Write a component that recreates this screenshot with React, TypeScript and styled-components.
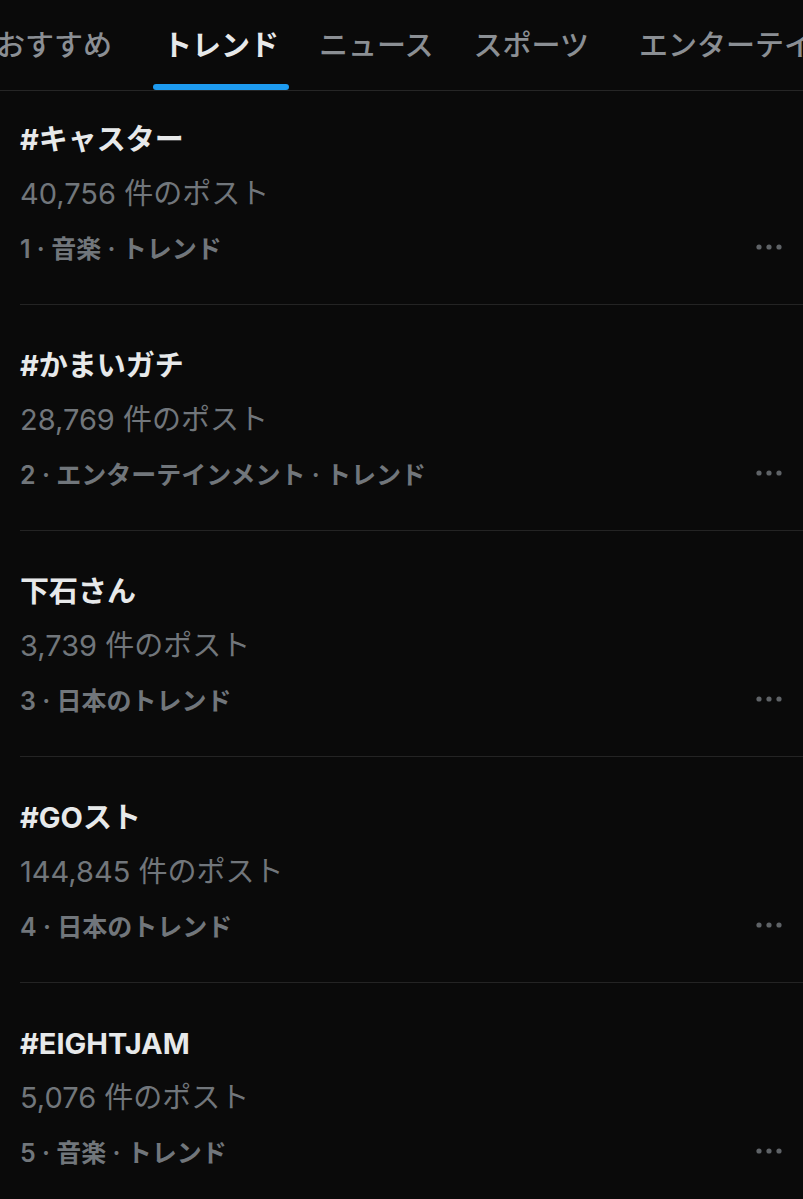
import React from "react";
import styled, { createGlobalStyle } from "styled-components";

const GlobalStyle = createGlobalStyle`
  html, body {
    margin: 0;
    padding: 0;
    background: #0a0a0a;
  }
  body {
    font-family: "Inter", "Noto Sans CJK JP", sans-serif;
    -webkit-font-smoothing: antialiased;
  }
`;

const Page = styled.div`
  width: 803px;
  min-height: 1199px;
  background: #0a0a0a;
  overflow: hidden;
`;

const TabBar = styled.nav`
  height: 90px;
  border-bottom: 1px solid #262626;
  overflow: hidden;
`;

const TabStrip = styled.div`
  display: flex;
  height: 100%;
  gap: 20px;
  margin-left: -14px;
  white-space: nowrap;
`;

const Tab = styled.div<{ $active?: boolean; $lead?: number }>`
  display: flex;
  flex-direction: column;
  flex-shrink: 0;
  height: 100%;
  padding: 0 10px;
  margin-left: ${(p) => p.$lead ?? 0}px;
  font-family: "Noto Sans CJK JP", sans-serif;
  font-size: 29px;
  font-weight: ${(p) => (p.$active ? 700 : 500)};
  color: ${(p) => (p.$active ? "#e7e9ea" : "#8b8f94")};
`;

const TabLabel = styled.span`
  flex: 1;
  display: flex;
  align-items: center;
  padding-top: 2px;
`;

const Indicator = styled.span<{ $active?: boolean }>`
  height: 6px;
  margin: 0 -10px;
  border-radius: 3px;
  background: ${(p) => (p.$active ? "#1d9bf0" : "transparent")};
`;

const List = styled.div`
  display: flex;
  flex-direction: column;
`;

const Row = styled.article<{ $first?: boolean }>`
  display: flex;
  flex-direction: column;
  margin-left: 20px;
  padding-top: ${(p) => (p.$first ? 29 : 41)}px;
  padding-bottom: 37px;
  border-bottom: 1px solid #242424;
`;

const Title = styled.div`
  height: 40px;
  line-height: 40px;
  font-size: 29px;
  font-weight: 700;
  color: #e7e9ea;
`;

const Count = styled.div`
  height: 40px;
  line-height: 40px;
  margin-top: 14px;
  font-size: 29px;
  font-weight: 400;
  color: #71767b;
`;

const MetaRow = styled.div`
  display: flex;
  align-items: center;
  justify-content: space-between;
  height: 40px;
  margin-top: 13px;
  padding-right: 21px;
`;

const Meta = styled.span`
  font-size: 25px;
  font-weight: 600;
  color: #71767b;
`;

const More = styled.svg`
  width: 26px;
  height: 6px;
  display: block;
`;

const tabs = [
  { label: "おすすめ" },
  { label: "トレンド", active: true, lead: 11 },
  { label: "ニュース" },
  { label: "スポーツ" },
  { label: "エンターテイメント", lead: 10 },
];

const trends = [
  { title: "#キャスター", count: "40,756", meta: "1 · 音楽 · トレンド" },
  { title: "#かまいガチ", count: "28,769", meta: "2 · エンターテインメント · トレンド" },
  { title: "下石さん", count: "3,739", meta: "3 · 日本のトレンド" },
  { title: "#GOスト", count: "144,845", meta: "4 · 日本のトレンド" },
  { title: "#EIGHTJAM", count: "5,076", meta: "5 · 音楽 · トレンド" },
];

function DotsIcon() {
  return (
    <More viewBox="0 0 26 6">
      <circle cx="3" cy="3" r="2.6" fill="#5f6367" />
      <circle cx="13" cy="3" r="2.6" fill="#5f6367" />
      <circle cx="23" cy="3" r="2.6" fill="#5f6367" />
    </More>
  );
}

export default function App() {
  return (
    <Page>
      <GlobalStyle />
      <TabBar>
        <TabStrip>
          {tabs.map((t) => (
            <Tab key={t.label} $active={t.active} $lead={t.lead}>
              <TabLabel>{t.label}</TabLabel>
              <Indicator $active={t.active} />
            </Tab>
          ))}
        </TabStrip>
      </TabBar>
      <List>
        {trends.map((t, i) => (
          <Row key={t.title} $first={i === 0}>
            <Title>{t.title}</Title>
            <Count>{t.count} 件のポスト</Count>
            <MetaRow>
              <Meta>{t.meta}</Meta>
              <DotsIcon />
            </MetaRow>
          </Row>
        ))}
      </List>
    </Page>
  );
}
